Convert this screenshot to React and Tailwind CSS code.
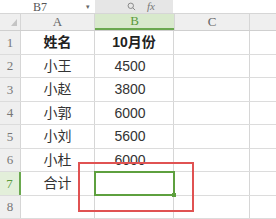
const rows = [
  { n: "1", a: "姓名", b: "10月份", head: true },
  { n: "2", a: "小王", b: "4500" },
  { n: "3", a: "小赵", b: "3800" },
  { n: "4", a: "小郭", b: "6000" },
  { n: "5", a: "小刘", b: "5600" },
  { n: "6", a: "小杜", b: "6000" },
  { n: "7", a: "合计", b: "", sel: true },
  { n: "8", a: "", b: "" },
];

const heights = ["h-[24px]", "h-[23px]"];

function App() {
  return (
    <div className="relative w-[276px] h-[219px] overflow-hidden bg-white text-[#333]" style={{ fontFamily: '"Liberation Sans", "Noto Sans CJK SC", sans-serif' }}>
      {/* name box + formula bar */}
      <div className="flex h-[14px] border-b border-[#d6d6d6]">
        <div className="flex w-[95px] items-center bg-white">
          <span className="ml-[33px] text-[12px] leading-none text-[#555]" style={{ fontFamily: '"Liberation Serif", serif' }}>B7</span>
          <span className="ml-auto mr-[5px] text-[7px] leading-none text-[#666]">▾</span>
        </div>
        <div className="flex w-[78px] items-center bg-[#e6e6e6]">
          <svg className="ml-[32px]" width="9" height="9" viewBox="0 0 10 10" fill="none" stroke="#888" strokeWidth="1.1">
            <circle cx="4.2" cy="4.2" r="3" />
            <path d="M6.4 6.4 L9 9" />
          </svg>
          <span className="ml-[11px] text-[11px] italic leading-none text-[#777]" style={{ fontFamily: '"Liberation Serif", serif' }}>fx</span>
        </div>
        <div className="flex-1 bg-white" />
      </div>

      {/* column headers */}
      <div className="flex h-[17px] border-b border-[#cfcfcf] bg-[#efefef] text-[13px] text-[#666]" style={{ fontFamily: '"Liberation Serif", serif' }}>
        <div className="relative w-[21px] border-r border-[#d6d6d6]">
          <svg className="absolute left-[11px] top-[5px]" width="6" height="7" viewBox="0 0 6 7">
            <path d="M6 0 L6 7 L0 7 Z" fill="#c4c4c4" />
          </svg>
        </div>
        <div className="flex w-[74px] items-center justify-center border-r border-[#d6d6d6]">A</div>
        <div className="flex w-[79px] items-center justify-center border-b-2 border-[#6aa84f] bg-[#d8e9cc] text-[#5a9a3c]">B</div>
        <div className="flex w-[76px] items-center justify-center border-r border-[#d6d6d6] border-l border-l-[#d6d6d6]">C</div>
        <div className="flex-1" />
      </div>

      {/* rows */}
      {rows.map((r, i) => (
        <div key={r.n} className={`flex ${heights[i % 2]} border-b border-[#dcdcdc]`}>
          <div
            className={`flex w-[21px] items-center justify-center text-[13px] ${r.sel ? "bg-[#e3efda] text-[#5a9a3c] border-r-2 border-[#6aa84f]" : "bg-[#efefef] text-[#777] border-r border-[#d6d6d6]"}`}
            style={{ fontFamily: '"Liberation Serif", serif' }}
          >
            {r.n}
          </div>
          <div className={`flex w-[74px] items-center justify-center border-r border-[#d6d6d6] text-[14px] ${r.head ? "font-bold text-[#222]" : ""}`}>
            {r.a}
          </div>
          <div className={`flex w-[79px] items-center justify-center border-r border-[#d6d6d6] text-[14px] ${r.head ? "font-bold text-[#222]" : "pr-[8px]"}`}>
            {r.b}
          </div>
          <div className="w-[76px] border-r border-[#d6d6d6]" />
          <div className="flex-1" />
        </div>
      ))}

      {/* selected cell */}
      <div className="absolute left-[94px] top-[171px] h-[25px] w-[81px] border-2 border-[#5ea03f]">
        <div className="absolute -bottom-[3px] -right-[3px] h-[4px] w-[4px] bg-[#5ea03f]" />
      </div>

      {/* red annotation */}
      <div className="absolute left-[78px] top-[162px] h-[50px] w-[116px] border-2 border-[#e05252]" />
    </div>
  );
}

export default App;
